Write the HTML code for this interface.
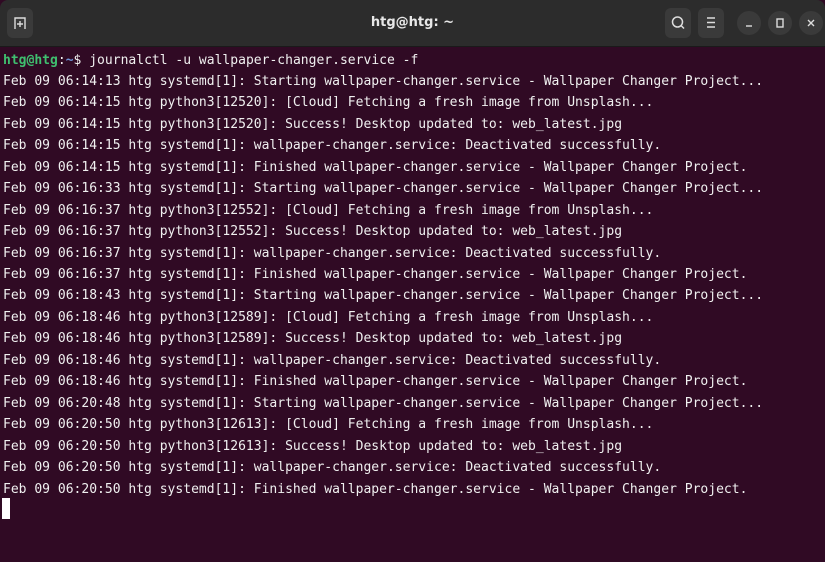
<!DOCTYPE html>
<html><head><meta charset="utf-8"><style>
html,body{margin:0;padding:0;width:825px;height:562px;overflow:hidden;background:#300a24;}
.bar{position:absolute;left:0;top:0;width:825px;height:46px;background:#2c2c2c;border-bottom:1px solid #1a1a1a;border-radius:8px 8px 0 0;}
.title{position:absolute;left:0;width:825px;top:15px;text-align:center;color:#e8e8e8;font:bold 13px "DejaVu Sans","Liberation Sans",sans-serif;}
.btn{position:absolute;top:8px;width:26px;height:30px;background:#3a3a3a;border-radius:6px;}
.cb{position:absolute;top:11px;width:24px;height:24px;background:#3a3a3a;border-radius:50%;}
.term{position:absolute;left:3px;top:49.5px;font:13.02px/21.45px "DejaVu Sans Mono",monospace;color:#f0f0f0;white-space:pre;}
.g{color:#3fbf6f;font-weight:bold}.b{color:#6d93d6;font-weight:bold}
.cur{position:absolute;left:2px;top:498px;width:8px;height:21px;background:#fff;}
</style></head><body>
<div class="bar">
<div class="btn" style="left:7px"><svg width="26" height="30" viewBox="0 0 26 30"><path d="M8 21V10h10v11" fill="none" stroke="#ddd" stroke-width="1.4"/><path d="M13 13v6M10 16h6" stroke="#ddd" stroke-width="1.4"/></svg></div>
<div class="title">htg@htg: ~</div>
<div class="btn" style="left:665px"><svg width="26" height="30" viewBox="0 0 26 30"><circle cx="12.5" cy="14" r="5" fill="none" stroke="#ddd" stroke-width="1.5"/><path d="M16 17.5l3 3" stroke="#ddd" stroke-width="1.5"/></svg></div>
<div class="btn" style="left:698px"><svg width="26" height="30" viewBox="0 0 26 30"><path d="M9 10h8M9 14.5h8M9 19h8" stroke="#ddd" stroke-width="1.4"/></svg></div>
<div class="cb" style="left:737px"><svg width="24" height="24"><path d="M9 15h6" stroke="#ddd" stroke-width="1.4"/></svg></div>
<div class="cb" style="left:768px"><svg width="24" height="24"><rect x="9" y="8" width="6" height="8" fill="none" stroke="#ddd" stroke-width="1.4"/></svg></div>
<div class="cb" style="left:799px"><svg width="24" height="24"><path d="M9 9l6 6M15 9l-6 6" stroke="#ddd" stroke-width="1.4"/></svg></div>
</div>
<div class="term"><span class="g">htg@htg</span>:<span class="b">~</span>$ journalctl -u wallpaper-changer.service -f
Feb 09 06:14:13 htg systemd[1]: Starting wallpaper-changer.service - Wallpaper Changer Project...
Feb 09 06:14:15 htg python3[12520]: [Cloud] Fetching a fresh image from Unsplash...
Feb 09 06:14:15 htg python3[12520]: Success! Desktop updated to: web_latest.jpg
Feb 09 06:14:15 htg systemd[1]: wallpaper-changer.service: Deactivated successfully.
Feb 09 06:14:15 htg systemd[1]: Finished wallpaper-changer.service - Wallpaper Changer Project.
Feb 09 06:16:33 htg systemd[1]: Starting wallpaper-changer.service - Wallpaper Changer Project...
Feb 09 06:16:37 htg python3[12552]: [Cloud] Fetching a fresh image from Unsplash...
Feb 09 06:16:37 htg python3[12552]: Success! Desktop updated to: web_latest.jpg
Feb 09 06:16:37 htg systemd[1]: wallpaper-changer.service: Deactivated successfully.
Feb 09 06:16:37 htg systemd[1]: Finished wallpaper-changer.service - Wallpaper Changer Project.
Feb 09 06:18:43 htg systemd[1]: Starting wallpaper-changer.service - Wallpaper Changer Project...
Feb 09 06:18:46 htg python3[12589]: [Cloud] Fetching a fresh image from Unsplash...
Feb 09 06:18:46 htg python3[12589]: Success! Desktop updated to: web_latest.jpg
Feb 09 06:18:46 htg systemd[1]: wallpaper-changer.service: Deactivated successfully.
Feb 09 06:18:46 htg systemd[1]: Finished wallpaper-changer.service - Wallpaper Changer Project.
Feb 09 06:20:48 htg systemd[1]: Starting wallpaper-changer.service - Wallpaper Changer Project...
Feb 09 06:20:50 htg python3[12613]: [Cloud] Fetching a fresh image from Unsplash...
Feb 09 06:20:50 htg python3[12613]: Success! Desktop updated to: web_latest.jpg
Feb 09 06:20:50 htg systemd[1]: wallpaper-changer.service: Deactivated successfully.
Feb 09 06:20:50 htg systemd[1]: Finished wallpaper-changer.service - Wallpaper Changer Project.</div>
<div class="cur"></div>
</body></html>
